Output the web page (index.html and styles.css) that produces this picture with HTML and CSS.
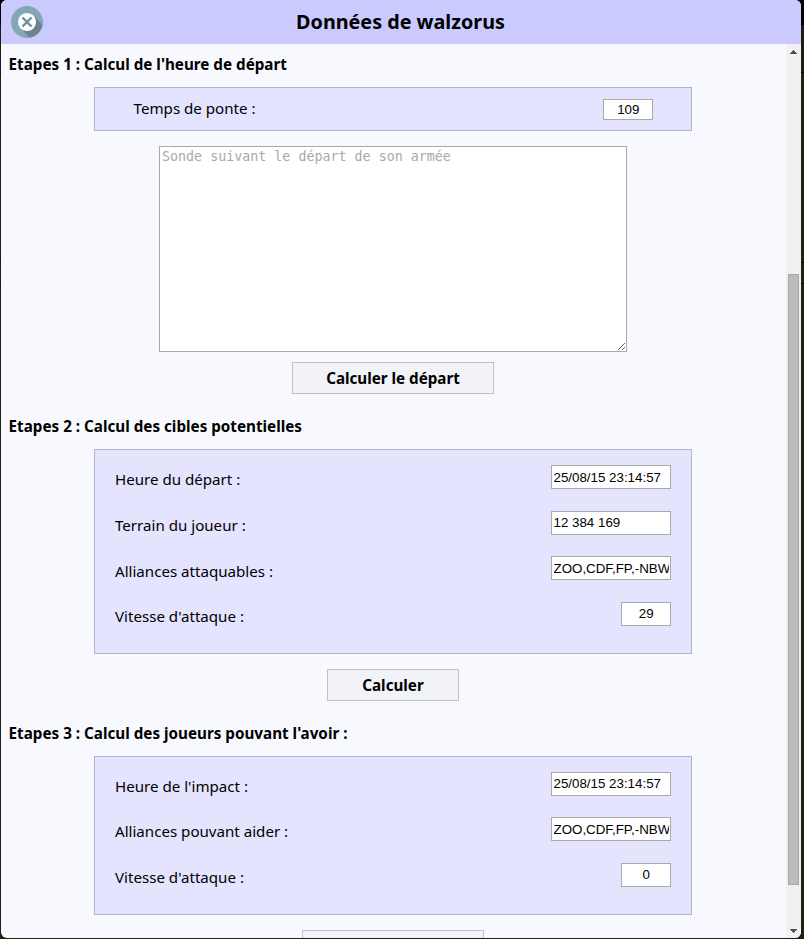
FILE: index.html
```
<!DOCTYPE html>
<html lang="fr">
<head>
<meta charset="utf-8">
<title>Données de walzorus</title>
<link rel="stylesheet" href="styles.css">
</head>
<body>
<div class="dialog">
  <header class="titlebar">
    <svg class="close" viewBox="0 0 32 32" width="32" height="32" role="img" aria-label="Fermer">
      <circle cx="16" cy="16" r="16" fill="#84a7b8"/>
      <path d="M22.4 9.6L31.6 19A16 16 0 0 1 19 31.7L9.6 22.4Z" fill="#6a8591"/>
      <circle cx="16" cy="16" r="9.1" fill="#fff"/>
      <path d="M11.5 11.5L20.5 20.5M20.5 11.5L11.5 20.5" stroke="#6d8d9b" stroke-width="2.4"/>
    </svg>
    <h1>Données de walzorus</h1>
  </header>
  <div class="body">
    <main class="content">
      <h2>Etapes 1 : Calcul de l'heure de départ</h2>
      <section class="panel panel-single">
        <label class="row"><span>Temps de ponte :</span><input class="num" value="109"></label>
      </section>
      <textarea placeholder="Sonde suivant le départ de son armée"></textarea>
      <button class="btn-start">Calculer le départ</button>

      <h2>Etapes 2 : Calcul des cibles potentielles</h2>
      <section class="panel">
        <label class="row"><span>Heure du départ :</span><input value="25/08/15 23:14:57"></label>
        <label class="row"><span>Terrain du joueur :</span><input value="12 384 169"></label>
        <label class="row"><span>Alliances attaquables :</span><input value="ZOO,CDF,FP,-NBW"></label>
        <label class="row"><span>Vitesse d'attaque :</span><input class="num" value="29"></label>
      </section>
      <button class="btn-targets">Calculer</button>

      <h2>Etapes 3 : Calcul des joueurs pouvant l'avoir :</h2>
      <section class="panel panel-players">
        <label class="row"><span>Heure de l'impact :</span><input value="25/08/15 23:14:57"></label>
        <label class="row"><span>Alliances pouvant aider :</span><input value="ZOO,CDF,FP,-NBW"></label>
        <label class="row"><span>Vitesse d'attaque :</span><input class="num" value="0"></label>
      </section>
      <button class="btn-players"></button>
    </main>
    <div class="scrollbar">
      <svg width="7" height="4" viewBox="0 0 7 4" shape-rendering="crispEdges"><path d="M0 4L3.5 0L7 4Z" fill="#505050"/></svg>
      <div class="thumb"></div>
      <svg width="7" height="4" viewBox="0 0 7 4" shape-rendering="crispEdges"><path d="M0 0H7L3.5 4Z" fill="#505050"/></svg>
    </div>
  </div>
</div>
</body>
</html>
```
FILE: styles.css
```
* { box-sizing: border-box; }

html, body { height: 100%; }

body {
  margin: 0;
  overflow: hidden;
  background: linear-gradient(#000 0 25px, #211a12 25px 72px, #000 72px 73px, #211e12 73px 262px, #000 262px 263px, #211e12 263px 283px, #000 283px 284px, #211e12 284px);
  font-family: "Noto Sans", "Open Sans", sans-serif;
  font-size: 15.2px;
  color: #000;
}

.dialog {
  display: flex;
  flex-direction: column;
  width: 800px;
  height: 938px;
  margin-left: 1px;
  overflow: hidden;
  border-radius: 6px;
  background: #f8f9ff;
}

.titlebar {
  display: grid;
  grid-template-columns: 32px 1fr 32px;
  align-items: center;
  flex: none;
  height: 44px;
  padding: 0 10px;
  background: #cacaff;
}

.close { display: block; }

h1 {
  margin: 0;
  padding-right: 1px;
  font-size: 19.76px;
  line-height: 44px;
  text-align: center;
}

.body { display: flex; flex: 1; min-height: 0; }

.content {
  display: flex;
  flex-direction: column;
  align-items: center;
  flex: 1;
  min-width: 0;
  padding-right: 1px;
  overflow: hidden;
}

.content > * { flex: none; }

h2 {
  align-self: stretch;
  height: 43px;
  margin: 0;
  padding: 10px 7.6px 0;
  font-size: 15.22px;
  line-height: 20px;
}

button + h2 { height: 55px; padding-top: 22px; }

.panel {
  width: 598px;
  padding: 15.2px 20px 24px;
  border: 1px solid #b3b3cc;
  background: #e4e4ff;
}

.panel-players { padding-top: 14.8px; }

.row {
  display: flex;
  justify-content: space-between;
  align-items: flex-start;
  height: 45.6px;
  font-size: 15.12px;
}

.row:last-child { height: 27px; }

.row span { line-height: 20px; padding-top: 4.2px; }
.panel-players .row span { padding-top: 4px; }

.panel-single { height: 44px; padding: 11px 38px 0 38.6px; }
.panel-single .row span { padding-top: 0; line-height: 19px; }
.panel-single input { height: 21px; }

input {
  width: 120px;
  height: 24px;
  padding: 1px 1.5px;
  border: 1px solid #a9a9a9;
  background: #fff;
  color: #000;
  font: 13.333px "Liberation Sans", sans-serif;
}

.num { width: 50px; padding-right: 1px; text-align: center; }

textarea {
  width: 468px;
  height: 206px;
  margin: 15px 0 10px;
  padding: 2px;
  border: 1px solid #a9a9a9;
  background: #fff;
  font: 13.333px "DejaVu Sans Mono", monospace;
}

textarea::placeholder { color: #a9a9a9; }

button {
  height: 32px;
  padding: 0 0 1px;
  border: 1px solid #c0c0c8;
  background: #f2f3f9;
  color: #000;
  font: bold 15.2px "Noto Sans", sans-serif;
}

.panel + button { margin-top: 15px; }
.btn-start { width: 202px; }
.btn-targets { width: 132px; padding-bottom: 0; }
.btn-players { width: 182px; }

.scrollbar {
  display: flex;
  flex-direction: column;
  align-items: center;
  justify-content: space-between;
  width: 15px;
  padding: 6px 0 5px;
  background: #f1f1f1;
}

.thumb {
  width: 11px;
  height: 611px;
  margin-top: 176px;
  border: 1px solid #a8a8a8;
  background: #bcbcbc;
}
```
